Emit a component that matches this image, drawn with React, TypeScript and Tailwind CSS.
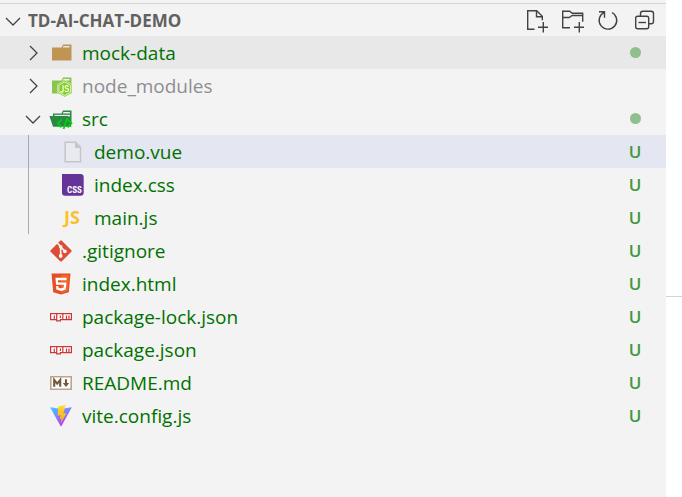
import type { ReactNode } from "react";

type Status = "dot" | "U" | "none";

type Entry = {
  name: string;
  icon: ReactNode;
  status: Status;
  open?: boolean;
  ignored?: boolean;
  background?: string;
  children?: Entry[];
};

function Chevron({ open }: { open: boolean }) {
  return (
    <svg className="h-4 w-4 shrink-0" viewBox="0 0 16 16" fill="none" stroke="#424242" strokeWidth="1.3" aria-hidden="true">
      {open ? <path d="M1 5l7 7 7-7" /> : <path d="M5 1l7 7-7 7" />}
    </svg>
  );
}

function Icon({ children }: { children: ReactNode }) {
  return (
    <svg className="h-[22px] w-[22px] shrink-0 overflow-visible" viewBox="0 0 22 22" aria-hidden="true">
      {children}
    </svg>
  );
}

const folderIcon = (
  <Icon>
    <path d="M2 5.500h9.500l1.500-3h8.500V18.500H2z" fill="#c09553" />
    <path d="M13.500 4h6v1.500h-6.700z" fill="#e8e8e8" />
  </Icon>
);

const nodeFolderIcon = (
  <Icon>
    <path d="M2 5.500h9.500l1.500-3h8.500V18.500H2z" fill="#8bc450" />
    <path d="M13.500 4h6v1.500h-6.700z" fill="#f3f3f3" />
    <g transform="translate(.7 .4)">
      <path d="M14 4.800l7.200 4.200v8.500L14 21.700l-7.200-4.200V9z" fill="#85ce2c" stroke="#f3f3f3" strokeWidth="0.5" />
      <path d="M14 6.500l5.900 3.400v6.800L14 20.100l-5.900-3.400V9.900z" fill="none" stroke="#e6f6cc" strokeWidth="0.9" />
      <path
        d="M12.400 9.800v5.700q0 1.300-1.200 1.300t-1.200-1.100M17.700 11.300q-.4-1.100-1.700-1.100-1.600 0-1.600 1.300 0 1.100 1.600 1.500 1.900.4 1.900 1.700 0 1.500-1.800 1.500-1.600 0-1.900-1.300"
        fill="none"
        stroke="#f3ffe2"
        strokeWidth="1.200"
      />
    </g>
  </Icon>
);

const srcFolderIcon = (
  <Icon>
    <path d="M3 5.500h8.500l1.500-3h8.500v14H3z" fill="#2c8745" />
    <path d="M13.500 4h6.300v1.500h-7z" fill="#f3f3f3" />
    <path d="M4.500 6.800H20V8.500H4.500z" fill="#e5eee7" />
    <path d="M-.6 8H18l3.500 10.800H3z" fill="#2c8745" />
    <path d="M11.800 11.300l-4 4 3.700 4M17.600 11.300l3.900 4-3.900 4M17.300 9.800l-3.700 11.200" fill="none" stroke="#00d10b" strokeWidth="1.700" />
  </Icon>
);

const fileIcon = (
  <Icon>
    <path d="M3.200 1.200h10.300l5 5v14.500H3.200z" fill="#e8e9f1" stroke="#c5c5c5" strokeWidth="1.500" />
    <path d="M13 1.200V7h5.500z" fill="#c5c5c5" />
  </Icon>
);

const cssIcon = (
  <Icon>
    <path d="M0 0h18.500a3.200 3.200 0 0 1 3.200 3.200v15.300a3.200 3.200 0 0 1-3.200 3.200H3.200A3.200 3.200 0 0 1 0 18.500z" fill="#663399" />
    <text x="5" y="19" fill="#fff" className="font-['Liberation_Sans_Narrow','Roboto_Condensed','Roboto',sans-serif] text-[9px] font-bold">
      CSS
    </text>
  </Icon>
);

const jsIcon = (
  <Icon>
    <text x="2" y="17" fill="#fbc02d" className="font-['Open_Sans',sans-serif] text-[18px] font-bold">
      JS
    </text>
  </Icon>
);

const gitIcon = (
  <Icon>
    <path d="M10.200.700q.8-.8 1.600 0l9.500 9.500q.8.8 0 1.600l-9.500 9.500q-.8.8-1.600 0L.700 11.800q-.8-.8 0-1.600z" fill="#dd4c35" />
    <path d="M7.300 3l3.400 3.600V16M10.800 7l3.900 4" fill="none" stroke="#f3f3f3" strokeWidth="1.700" />
    <circle cx="10.700" cy="6.700" r="1.800" fill="#f3f3f3" />
    <circle cx="10.700" cy="16" r="1.900" fill="#f3f3f3" />
    <circle cx="14.900" cy="11.300" r="1.900" fill="#f3f3f3" />
  </Icon>
);

const htmlIcon = (
  <Icon>
    <path d="M1.500.500h19l-1.700 18.700L11 21.500l-7.800-2.300z" fill="#e44f26" />
    <path d="M11 2h8l-1.500 16-6.500 1.900z" fill="#f1662a" />
    <path d="M16.500 6H6.700l.4 4.600h8.100l-.5 5-3.700 1.100-3.600-1.100-.2-2.400" fill="none" stroke="#fff" strokeWidth="2.300" />
  </Icon>
);

const npmIcon = (
  <Icon>
    <g transform="translate(0 7) scale(1.222)">
      <path d="M0 0h18v6H9v1H5V6H0z" fill="#cb3837" />
      <path
        d="M1 5h2V2h1v3h1V1H1zM6 1v5h2V5h2V1zM8 2h1v2H8zM11 1v4h2V2h1v3h1V2h1v3h1V1z"
        fill="#fff"
        fillRule="evenodd"
      />
    </g>
  </Icon>
);

const markdownIcon = (
  <Icon>
    <path d="M.8 4.800h20.400v12.500H.8z" fill="#fff" stroke="#b9a592" strokeWidth="1.600" />
    <path d="M4.200 14.800V8l3 3.700L10.200 8v6.800M16 7.300v5" fill="none" stroke="#755838" strokeWidth="2.100" />
    <path d="M12.800 11h6.400L16 14.900z" fill="#755838" />
  </Icon>
);

const viteIcon = (
  <Icon>
    <defs>
      <linearGradient id="vite-body" x1="0" y1="0" x2="0.6" y2="1">
        <stop offset="0" stopColor="#41d1ff" />
        <stop offset="1" stopColor="#bd34fe" />
      </linearGradient>
      <linearGradient id="vite-bolt" x1="0" y1="0" x2="0" y2="1">
        <stop offset="0" stopColor="#ffdc38" />
        <stop offset="1" stopColor="#ffa800" />
      </linearGradient>
    </defs>
    <path d="M.2 2.600q0-.5.700-.4L11 4l10.100-1.800q.7 0 .5.600L11.500 20.900q-.5.700-1 0z" fill="url(#vite-body)" />
    <path d="M15.500.100L8.300 1.500l-.6 9.200 3-.6-.9 4 1.900-.5-1.200 5.100L16.500 7.900l-3.200.7z" fill="url(#vite-bolt)" />
  </Icon>
);

const entries: Entry[] = [
  { name: "mock-data", icon: folderIcon, status: "dot", open: false, background: "bg-[#e8e8e8]" },
  { name: "node_modules", icon: nodeFolderIcon, status: "none", open: false, ignored: true },
  {
    name: "src",
    icon: srcFolderIcon,
    status: "dot",
    open: true,
    children: [
      { name: "demo.vue", icon: fileIcon, status: "U", background: "bg-[#e4e6f1]" },
      { name: "index.css", icon: cssIcon, status: "U" },
      { name: "main.js", icon: jsIcon, status: "U" },
    ],
  },
  { name: ".gitignore", icon: gitIcon, status: "U" },
  { name: "index.html", icon: htmlIcon, status: "U" },
  { name: "package-lock.json", icon: npmIcon, status: "U" },
  { name: "package.json", icon: npmIcon, status: "U" },
  { name: "README.md", icon: markdownIcon, status: "U" },
  { name: "vite.config.js", icon: viteIcon, status: "U" },
];

function Row({ entry, nested = false }: { entry: Entry; nested?: boolean }) {
  return (
    <li>
      <button
        type="button"
        aria-expanded={entry.open}
        className={`flex h-[33px] w-full items-center pr-5 text-left ${nested ? "pl-[37px]" : "pl-[25px]"} ${entry.background ?? ""}`}
      >
        {entry.open === undefined ? <span className="w-4 shrink-0" /> : <Chevron open={entry.open} />}
        <span className="ml-[9px] flex">{entry.icon}</span>
        <span className={`ml-[10px] min-w-0 flex-1 truncate ${entry.ignored ? "text-[#8e8e90]" : "text-[#007100]"}`}>
          {entry.name}
        </span>
        <span className="flex w-[22px] shrink-0 justify-center">
          {entry.status === "dot" && <span className="h-[11px] w-[11px] rounded-full bg-[#8fbe8f]" />}
          {entry.status === "U" && <span className="text-[17px] font-semibold text-[#409840]">U</span>}
        </span>
      </button>
      {entry.children && (
        <ul className="relative">
          {entry.children.map((child) => (
            <Row key={child.name} entry={child} nested />
          ))}
          <span className="absolute inset-y-0 left-7 w-px bg-[#a9a9a9]" />
        </ul>
      )}
    </li>
  );
}

function Action({ label, children }: { label: string; children: ReactNode }) {
  return (
    <button type="button" aria-label={label} className="h-6 w-6">
      <svg viewBox="0 0 24 24" className="h-6 w-6" fill="none" stroke="#424242" strokeWidth="1.400" aria-hidden="true">
        {children}
      </svg>
    </button>
  );
}

export default function App() {
  return (
    <div className="flex min-h-screen bg-white font-['Open_Sans','Noto_Sans',sans-serif]">
      <aside className="min-w-0 flex-1 bg-[#f3f3f3] pt-[3px] text-[19px] leading-6">
        <header className="flex h-[33px] items-center border-t border-[#d4d4d4] pt-px pl-[5px] pr-[10px]">
          <button type="button" aria-expanded="true" className="flex min-w-0 flex-1 items-center gap-[7px] text-left">
            <Chevron open />
            <span className="truncate text-[17px] font-bold text-[#616161]">TD-AI-CHAT-DEMO</span>
          </button>
          <div className="flex gap-3">
            <Action label="New File">
              <path d="M10.500 20.300H3.700V1.700h9l5.600 5.600v4M12.500 1.700v6.100h5.800M19.300 13v10.500M14 18.200h10" />
            </Action>
            <Action label="New Folder">
              <path d="M10 18.700H2.700V2.300h7l2.500 2h10.500v8.500M2.700 8.500h6.500l3-2h10.500M19.300 13v10.500M14 18.200h10" />
            </Action>
            <Action label="Refresh Explorer">
              <path d="M3 2.700h5.500v6M8.300 3.300A8.800 8.800 0 1 0 16 3.500" />
            </Action>
            <Action label="Collapse Folders">
              <path d="M8.500 7V4.500q0-2.300 2.300-2.300h8.400q2.300 0 2.300 2.300v8q0 2.300-2.300 2.300h-2.400" />
              <rect x="3.700" y="7.300" width="13" height="12.500" rx="2" />
              <path d="M6.500 13.500h7.500" />
            </Action>
          </div>
        </header>
        <ul>
          {entries.map((entry) => (
            <Row key={entry.name} entry={entry} />
          ))}
        </ul>
      </aside>
      <div className="w-4 shrink-0">
        <div className="h-[297px] border-b border-[#d4d4d4]" />
      </div>
    </div>
  );
}
